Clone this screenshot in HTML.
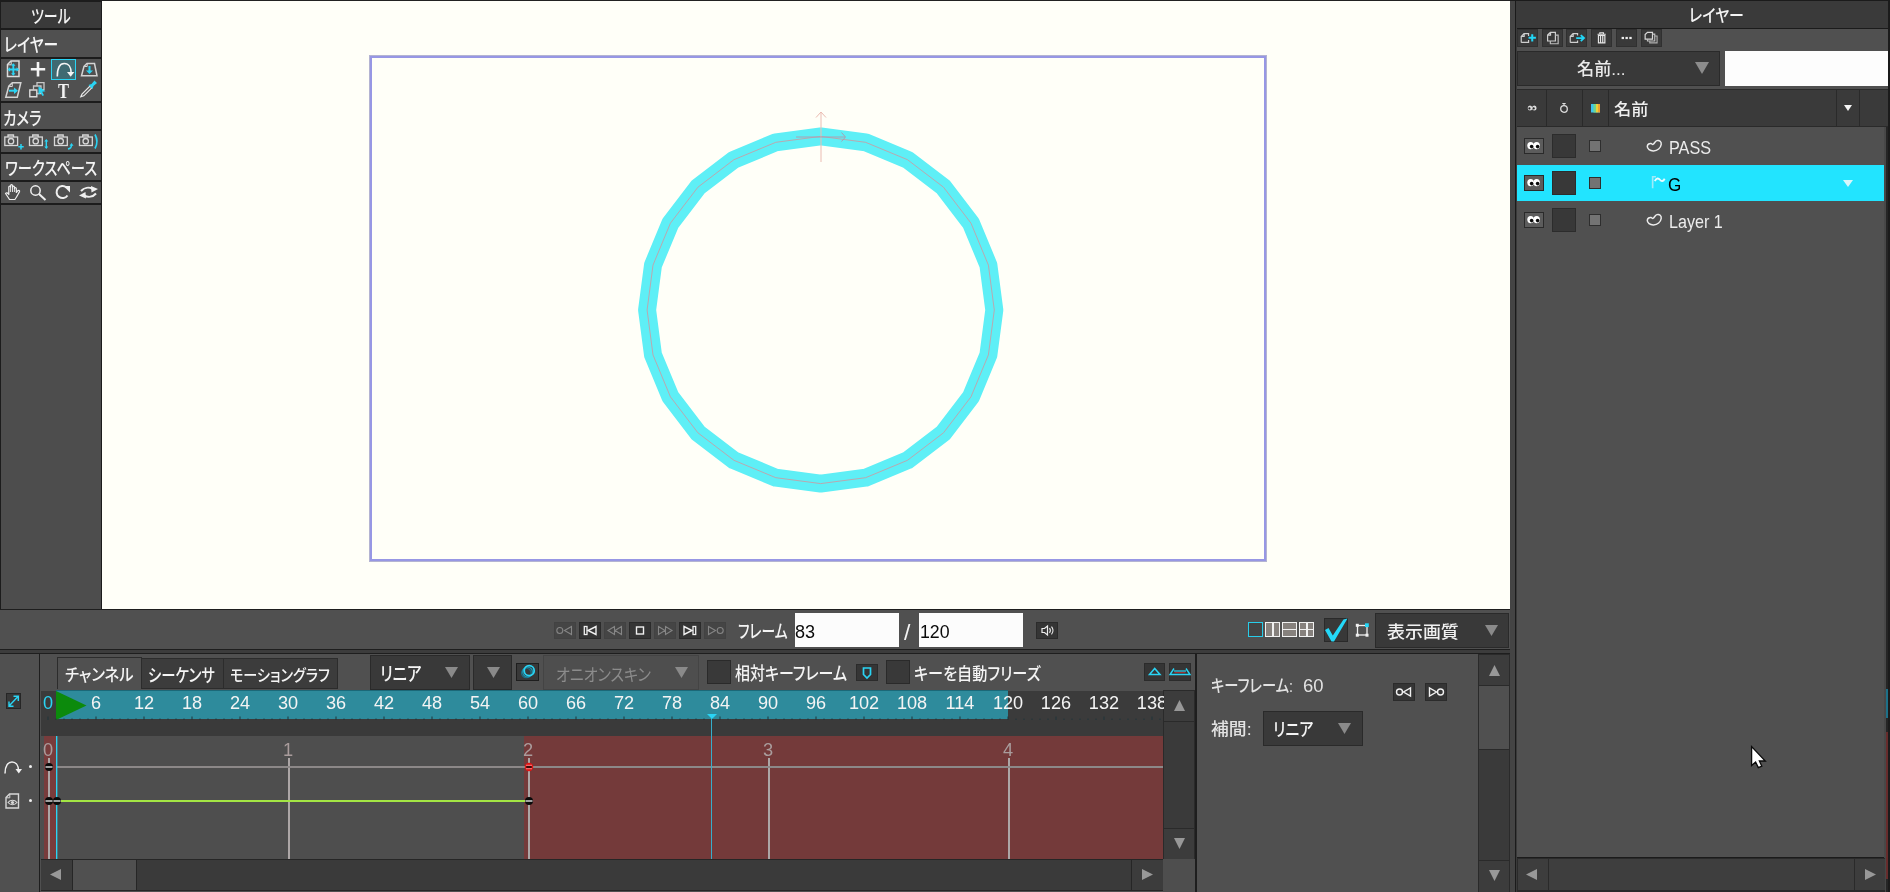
<!DOCTYPE html>
<html lang="ja">
<head>
<meta charset="utf-8">
<title>Moho</title>
<style>
html,body{margin:0;padding:0;}
body{width:1890px;height:892px;overflow:hidden;background:#222;position:relative;
  font-family:"Liberation Sans","Noto Sans CJK JP",sans-serif;color:#f2f2f2;font-size:16px;}
.a{position:absolute;box-sizing:border-box;}
.mid{background:#505050;}
.dk{background:#3a3a3a;}
.ln{background:#1e1e1e;}
.t{position:absolute;white-space:nowrap;line-height:1;transform-origin:0 0;font-weight:400;
  font-feature-settings:"palt";}
#texts{position:absolute;left:0;top:0;width:1890px;height:892px;will-change:transform;pointer-events:none;}
.ti{position:absolute;will-change:transform;line-height:1;font-size:20px;font-family:"Liberation Serif",serif;font-weight:700;color:#f4f4f4;transform:scaleX(.82);transform-origin:0 0;}
svg{position:absolute;overflow:visible;}
.rl{top:6px;width:40px;text-align:center;font-size:18px;font-weight:400;transform:scaleX(.88);transform-origin:50% 50%;}
</style>
</head>
<body>
<!-- ================= LEFT TOOLBAR ================= -->
<div id="left" class="a" style="left:0;top:0;width:102px;height:610px;background:#1c1c1c;">
  <div class="a dk" style="left:1px;top:2px;width:100px;height:26px;"></div>
  <div class="a mid" style="left:1px;top:30px;width:100px;height:27px;"></div>
  <div class="a mid" style="left:1px;top:59px;width:100px;height:42px;"></div>
  <div class="a mid" style="left:1px;top:103px;width:100px;height:26px;"></div>
  <div class="a mid" style="left:1px;top:131px;width:100px;height:21px;"></div>
  <div class="a mid" style="left:1px;top:154px;width:100px;height:26px;"></div>
  <div class="a mid" style="left:1px;top:182px;width:100px;height:21px;"></div>
  <div class="a" style="left:1px;top:205px;width:100px;height:404px;background:#4d4d4d;"></div>
  <div class="a" style="left:50.500px;top:59px;width:25.500px;height:21px;background:#3f6a72;border:1.500px solid #2ad4f4;"></div>
  <svg width="102" height="210" style="left:0;top:0;" viewBox="0 0 102 210" fill="none" stroke-linecap="butt">
    <!-- row 1 -->
    <path d="M7.500 76.500V64.500l3.500-3.500h8v15.500z" stroke="#dcdcdc" stroke-width="1.500"/>
    <path d="M7.700 64.800h3.500V61.200" stroke="#dcdcdc" stroke-width="1"/>
    <path d="M13.300 64.500v10M8.800 69.500h9" stroke="#2ad4f4" stroke-width="1.800"/>
    <path d="M13.300 63.200l2.200 2.500h-4.400zM13.300 75.800l2.200-2.500h-4.400zM7.500 69.500l2.500-2.200v4.400zM19.100 69.500l-2.500-2.200v4.400z" fill="#2ad4f4"/>
    <path d="M38 62v14.500M30.800 69.200h14.400" stroke="#f4f4f4" stroke-width="2.600"/>
    <path d="M57.300 76.500c0-8 2.500-13 7-13s6.800 4 6.800 9" stroke="#f4f4f4" stroke-width="1.600"/>
    <path d="M67 72h7.300l-3.600 4.800z" fill="#f4f4f4"/>
    <path d="M81.500 75.800l2.500-9.500 3-2.800h7.500l2.500 12.300z" stroke="#d4d4d4" stroke-width="1.500"/>
    <path d="M84.200 66.500h3V63.800" stroke="#d4d4d4" stroke-width="1"/>
    <path d="M89.500 66v5.500" stroke="#2ad4f4" stroke-width="2"/>
    <path d="M86 70.500h7l-3.500 3.500z" fill="#2ad4f4"/>
    <!-- row 2 -->
    <path d="M5.800 97.200l3-11 3.500-3.500h8.500l-3.500 14.500z" stroke="#d4d4d4" stroke-width="1.500"/>
    <path d="M9 86.500h3.300v-3.500" stroke="#d4d4d4" stroke-width="1"/>
    <path d="M9 90.700h6" stroke="#2ad4f4" stroke-width="2"/>
    <path d="M14 87.500l4 3.200-4 3.200z" fill="#2ad4f4"/>
    <path d="M29.800 90h7v6.800h-7z" stroke="#dcdcdc" stroke-width="1.400"/>
    <path d="M33.500 90V86h7.500v7.500h-4" stroke="#c8c8c8" stroke-width="1.300"/>
    <path d="M37 86V82.700h7v7h-3" stroke="#c8c8c8" stroke-width="1.300"/>
    <path d="M38.500 86.300l7 5-3.300.5 1.800 3.500-1.600.8-1.800-3.500-2.100 2.400z" fill="#2ad4f4"/>
    <!-- eyedropper -->
    <path d="M80.800 96.800l1.200-2.800 8-8 1.800 1.800-8 8z" stroke="#e8e8e8" stroke-width="1.200" fill="#555"/>
    <path d="M88.500 85l3-1 3-3.500 2.500 2.500-3.500 3-1 3z" fill="#2ad4f4"/>
    <!-- cameras -->
    <g stroke="#d8d8d8" stroke-width="1.300">
      <rect x="4.800" y="137" width="12.800" height="8.500"/><path d="M8 137v-2h5.500v2"/><circle cx="11" cy="141.200" r="2.700"/>
      <rect x="29.500" y="137" width="12.800" height="8.500"/><path d="M32.700 137v-2h5.500v2"/><circle cx="35.700" cy="141.200" r="2.700"/>
      <rect x="54.500" y="137" width="12.800" height="8.500"/><path d="M57.700 137v-2h5.500v2"/><circle cx="60.700" cy="141.200" r="2.700"/>
      <rect x="79.500" y="137" width="12.800" height="8.500"/><path d="M82.700 137v-2h5.500v2"/><circle cx="85.700" cy="141.200" r="2.700"/>
    </g>
    <path d="M21 144v5.500M18.300 146.700h5.400" stroke="#2ad4f4" stroke-width="1.500"/>
    <path d="M46.300 140.500v7" stroke="#2ad4f4" stroke-width="1.400"/>
    <path d="M46.300 139l2 2.500h-4zM46.300 149l2-2.500h-4z" fill="#2ad4f4"/>
    <path d="M68 149c2.500-.5 3.500-2 3.500-4" stroke="#2ad4f4" stroke-width="1.500"/>
    <path d="M71.500 143l2 2.800h-4z" fill="#2ad4f4"/>
    <path d="M95 134.500c2.500 4.500 2.500 9.500 0 14" stroke="#2ad4f4" stroke-width="1.700"/>
    <!-- hand -->
    <path d="M9.500 199.500c-1.500-2.500-3-4.500-4-6 .8-1 2-.8 3.300 1V187c0-1.300 1.800-1.300 1.800 0v-1.500c0-1.300 1.900-1.300 1.900 0V187c0-1.300 1.900-1.300 1.900 0v1.500c0-1.300 1.900-1.300 1.900 0v4l1.500-1.800c1-1 2.300 0 1.600 1.200-1.300 2.300-2.500 5-4.500 7.600z" stroke="#f0f0f0" stroke-width="1.200" stroke-linejoin="round"/>
    <path d="M10.600 187v5M12.500 187v5M14.400 188.500v3.500" stroke="#f0f0f0" stroke-width=".9"/>
    <!-- magnifier -->
    <circle cx="35.500" cy="190.500" r="4.700" stroke="#f0f0f0" stroke-width="1.500"/>
    <path d="M39 194l6.500 6" stroke="#f0f0f0" stroke-width="2"/>
    <!-- rotate -->
    <path d="M67.500 195.500a6 6 0 1 1-1-8" stroke="#f0f0f0" stroke-width="2"/>
    <path d="M63.500 186h6.500v6.500z" fill="#f0f0f0"/>
    <!-- swap arrows -->
    <path d="M81 191c3-3.500 8-4 12-2" stroke="#f0f0f0" stroke-width="2"/>
    <path d="M91 186l7 3-6.500 3.500z" fill="#f0f0f0"/>
    <path d="M96 193.500c-3 3.500-8 4-12 2" stroke="#f0f0f0" stroke-width="2"/>
    <path d="M86 198.500l-7-3 6.500-3.500z" fill="#f0f0f0"/>
  </svg>
  <span class="ti" style="left:57.500px;top:81px;">T</span>
</div>

<!-- ================= CANVAS ================= -->
<div id="canvas" class="a" style="left:102px;top:1px;width:1408px;height:608px;background:#fffff8;">
  <div class="a" style="left:267px;top:54px;width:898px;height:507px;border:1px solid #b4b4d2;"></div><div class="a" style="left:268px;top:55px;width:896px;height:505px;border:2px solid #9797e4;"></div>
  <svg width="1408" height="608" style="left:0;top:0;">
    <polygon points="718.7,135.4 673.8,141.3 631.9,158.7 595.9,186.2 568.4,222.2 551.0,264.1 545.1,309.0 551.0,353.9 568.4,395.8 595.9,431.8 631.9,459.3 673.8,476.7 718.7,482.6 763.6,476.7 805.5,459.3 841.5,431.8 869.0,395.8 886.4,353.9 892.3,309.0 886.4,264.1 869.0,222.2 841.5,186.2 805.5,158.7 763.6,141.3" fill="none" stroke="#5eeff6" stroke-width="18" stroke-linejoin="round"/>
    <polygon points="718.7,135.4 673.8,141.3 631.9,158.7 595.9,186.2 568.4,222.2 551.0,264.1 545.1,309.0 551.0,353.9 568.4,395.8 595.9,431.8 631.9,459.3 673.8,476.7 718.7,482.6 763.6,476.7 805.5,459.3 841.5,431.8 869.0,395.8 886.4,353.9 892.3,309.0 886.4,264.1 869.0,222.2 841.5,186.2 805.5,158.7 763.6,141.3" fill="none" stroke="#b9a9b0" stroke-width="1"/>
    <g fill="none" stroke="#ebbcb2" stroke-width="1">
      <path d="M719 161V111M714 116.5l5-5.5 5 5.5"/>
      <path d="M694 136h49M739.5 131.5l4 4.5-4 4.5" stroke="#a8a0b4"/>
    </g>
  </svg>
</div>

<!-- ================= RIGHT PANEL ================= -->
<div id="right" class="a" style="left:1510px;top:0;width:380px;height:892px;background:#1b1b1b;">
  <div class="a" style="left:0;top:1px;width:4.500px;height:891px;background:#444;"></div>
  <div class="a" style="left:6px;top:1px;width:1px;height:891px;background:#3a3a3a;"></div>
  <div class="a dk" style="left:7px;top:1px;width:371px;height:27px;"></div>
  <div class="a mid" style="left:7px;top:29px;width:371px;height:97px;"></div>
  <div class="a" style="left:7.0px;top:29px;width:21px;height:17.500px;background:#393939;border:1px solid #303030;"></div><svg width="19.300" height="15.600" style="left:7.8px;top:29.600px;" viewBox="0 0 21 17"><path d="M3.500 13.500V7l3-3h5v2.500M11.500 11v2.500h-8M3.700 7h3V4" fill="none" stroke="#cfcfcf" stroke-width="1.3"/><path d="M15.500 4.500v8M11.500 8.500h8" stroke="#22d6f6" stroke-width="2.200" fill="none"/></svg>
  <div class="a" style="left:31.7px;top:29px;width:21px;height:17.500px;background:#393939;border:1px solid #303030;"></div><svg width="19.300" height="15.600" style="left:32.5px;top:29.600px;" viewBox="0 0 21 17"><path d="M5 12V5.500l3-3h5.500V12zM5.200 5.600h3V2.700" fill="none" stroke="#cfcfcf" stroke-width="1.3"/><path d="M8 12v3h8.500V5.500h-3" fill="none" stroke="#bdbdbd" stroke-width="1.3"/></svg>
  <div class="a" style="left:56.4px;top:29px;width:21px;height:17.500px;background:#393939;border:1px solid #303030;"></div><svg width="19.300" height="15.600" style="left:57.2px;top:29.600px;" viewBox="0 0 21 17"><path d="M3.500 13.500V7l3-3h5v2M11.500 11.500v2h-8M3.700 7h3V4" fill="none" stroke="#cfcfcf" stroke-width="1.3"/><path d="M10 8.800h8M15 5.500l3.500 3.300-3.500 3.300" stroke="#22d6f6" stroke-width="2" fill="none"/></svg>
  <div class="a" style="left:81.1px;top:29px;width:21px;height:17.500px;background:#393939;border:1px solid #303030;"></div><svg width="19.300" height="15.600" style="left:81.9px;top:29.600px;" viewBox="0 0 21 17"><path d="M6 4.700h9M8.500 4.500V3h4v1.500" fill="none" stroke="#e6e6e6" stroke-width="1.2"/><path d="M7 6h7v8H7zM9.300 6v8M11.700 6v8" fill="none" stroke="#e6e6e6" stroke-width="1.3"/></svg>
  <div class="a" style="left:105.8px;top:29px;width:21px;height:17.500px;background:#393939;border:1px solid #303030;"></div><svg width="19.300" height="15.600" style="left:106.6px;top:29.600px;" viewBox="0 0 21 17"><rect x="5" y="7.500" width="2.600" height="2.400" fill="#eee"/><rect x="9.200" y="7.500" width="2.600" height="2.400" fill="#eee"/><rect x="13.400" y="7.500" width="2.600" height="2.400" fill="#eee"/></svg>
  <div class="a" style="left:130.5px;top:29px;width:21px;height:17.500px;background:#393939;border:1px solid #303030;"></div><svg width="19.300" height="15.600" style="left:131.3px;top:29.600px;" viewBox="0 0 21 17"><path d="M4.500 10V5l2.500-2.500h5.500V10z" fill="#3a3a3a" stroke="#d8d8d8" stroke-width="1.3"/><path d="M7 10v2h8V4.500h-2.500" fill="none" stroke="#c4c4c4" stroke-width="1.200"/><path d="M9.500 12v2h8V6.500H15" fill="none" stroke="#b0b0b0" stroke-width="1.200"/></svg>
  <div class="a" style="left:7px;top:50.500px;width:203px;height:35px;background:#393939;border:1px solid #2a2a2a;"></div>
  <svg width="14" height="12" style="left:185px;top:62px;" viewBox="0 0 14 12"><path d="M0 0h14L7 12z" fill="#8c8c8c"/></svg>
  <div class="a" style="left:215px;top:50.500px;width:163px;height:35px;background:#fdfdfd;"></div>
  <div class="a" style="left:7px;top:89px;width:371px;height:38px;background:#2a2a2a;"></div>
  <div class="a dk" style="left:7px;top:90px;width:29px;height:36px;"></div>
  <div class="a dk" style="left:37px;top:90px;width:35px;height:36px;"></div>
  <div class="a dk" style="left:73px;top:90px;width:25px;height:36px;"></div>
  <div class="a dk" style="left:99px;top:90px;width:227px;height:36px;"></div>
  <div class="a dk" style="left:327px;top:90px;width:22px;height:36px;"></div>
  <div class="a dk" style="left:350px;top:90px;width:28px;height:36px;"></div>
  <svg width="12" height="8" style="left:16px;top:104px;" viewBox="0 0 12 8"><ellipse cx="4" cy="4" rx="2.300" ry="2.500" fill="#ddd"/><ellipse cx="8.300" cy="4" rx="2.300" ry="2.500" fill="#ddd"/><circle cx="3.400" cy="4.400" r="1.100" fill="#222"/><circle cx="7.700" cy="4.400" r="1.100" fill="#222"/></svg>
  <svg width="10" height="12" style="left:49px;top:102px;" viewBox="0 0 10 12"><circle cx="5" cy="7" r="3.300" fill="none" stroke="#ddd" stroke-width="1.300"/><path d="M3.300 1.500h3.400M5 1.500v2" stroke="#ddd" stroke-width="1.200"/></svg>
  <svg width="8" height="8" style="left:81px;top:104px;" viewBox="0 0 8 8"><rect width="9" height="8.500" fill="#3cc4ee"/><rect x="2.500" width="2.500" height="8.500" fill="#6fd58f"/><rect x="5" width="2" height="8.500" fill="#e8d23c"/><rect x="7" width="2" height="8.500" fill="#f0a030"/></svg>
  <svg width="8" height="6" style="left:334px;top:105px;" viewBox="0 0 8 6"><path d="M0 0h8L4 6z" fill="#f4f4f4"/></svg>
  <div class="a mid" style="left:7px;top:127px;width:371px;height:730px;background:#505050;"></div>
  
  <div class="a" style="left:14px;top:138px;width:19.500px;height:15.500px;background:#5c5c5c;border:1px solid #2a2a2a;"></div>
  <svg width="19" height="15" style="left:14px;top:138px;" viewBox="0 0 19 15"><ellipse cx="6.6" cy="7.6" rx="3.3" ry="3.6" fill="#fff"/><ellipse cx="12.6" cy="7.6" rx="3.3" ry="3.6" fill="#fff"/><circle cx="7.6" cy="8.6" r="1.8" fill="#0a0a0a"/><circle cx="13.6" cy="8.6" r="1.8" fill="#0a0a0a"/></svg>
  <div class="a" style="left:42px;top:134.4px;width:24px;height:23.500px;background:#383838;border:1px solid #2c2c2c;"></div>
  <div class="a" style="left:79px;top:140px;width:12px;height:12px;background:#737373;border:1px solid #2e2e2e;"></div>
  <svg width="17" height="13" style="left:136px;top:139px;" viewBox="0 0 17 13"><path d="M6.900 5.400C8.500 4.800 8.800 2.200 11 1.600C13.500.9 15.600 2.800 15.200 5.500C14.700 9 11.500 11.800 7.500 11.900C4 12 1.200 10 1.300 7.300C1.400 5.200 3.500 4.200 5 4.500C5.800 4.700 6.200 5.500 6.900 5.400z" fill="none" stroke="#ececec" stroke-width="1.500"/></svg>
  
  <div class="a" style="left:7px;top:165px;width:367px;height:36px;background:#22e4ff;"></div>
  <div class="a" style="left:14px;top:175px;width:19.500px;height:15.500px;background:#5c5c5c;border:1px solid #2a2a2a;"></div>
  <svg width="19" height="15" style="left:14px;top:175px;" viewBox="0 0 19 15"><ellipse cx="6.6" cy="7.6" rx="3.3" ry="3.6" fill="#fff"/><ellipse cx="12.6" cy="7.6" rx="3.3" ry="3.6" fill="#fff"/><circle cx="7.6" cy="8.6" r="1.8" fill="#0a0a0a"/><circle cx="13.6" cy="8.6" r="1.8" fill="#0a0a0a"/></svg>
  <div class="a" style="left:42px;top:171.4px;width:24px;height:23.500px;background:#383838;border:1px solid #2c2c2c;"></div>
  <div class="a" style="left:79px;top:177px;width:12px;height:12px;background:#737373;border:1px solid #2e2e2e;"></div>
  <svg width="17.500" height="17.500" style="left:141px;top:174px;" viewBox="0 0 16 16"><path d="M1.500 13V2.500h3" fill="none" stroke="#9feaf8" stroke-width="1.5"/><path d="M3.500 6.500c1.500-3 3.300-3 4.700-1.200s3 1.500 4.300-1" fill="none" stroke="#e8fbff" stroke-width="1.7"/></svg>
  <svg width="10" height="7" style="left:333px;top:180px;" viewBox="0 0 10 7"><path d="M0 0h10L5 7z" fill="#d8f6fb"/></svg>
  
  <div class="a" style="left:14px;top:212px;width:19.500px;height:15.500px;background:#5c5c5c;border:1px solid #2a2a2a;"></div>
  <svg width="19" height="15" style="left:14px;top:212px;" viewBox="0 0 19 15"><ellipse cx="6.6" cy="7.6" rx="3.3" ry="3.6" fill="#fff"/><ellipse cx="12.6" cy="7.6" rx="3.3" ry="3.6" fill="#fff"/><circle cx="7.6" cy="8.6" r="1.8" fill="#0a0a0a"/><circle cx="13.6" cy="8.6" r="1.8" fill="#0a0a0a"/></svg>
  <div class="a" style="left:42px;top:208.4px;width:24px;height:23.500px;background:#383838;border:1px solid #2c2c2c;"></div>
  <div class="a" style="left:79px;top:214px;width:12px;height:12px;background:#737373;border:1px solid #2e2e2e;"></div>
  <svg width="17" height="13" style="left:136px;top:213px;" viewBox="0 0 17 13"><path d="M6.900 5.400C8.500 4.800 8.800 2.200 11 1.600C13.500.9 15.600 2.800 15.200 5.500C14.700 9 11.500 11.800 7.500 11.900C4 12 1.200 10 1.300 7.300C1.400 5.200 3.500 4.200 5 4.500C5.800 4.700 6.200 5.500 6.900 5.400z" fill="none" stroke="#ececec" stroke-width="1.500"/></svg>
  

  <div class="a" style="left:374px;top:127px;width:2px;height:765px;background:#484848;"></div>
  <div class="a" style="left:375.500px;top:127px;width:2.500px;height:765px;background:#262626;"></div>
  <div class="a" style="left:375.500px;top:689px;width:2px;height:29px;background:#1d7088;"></div>
  <div class="a" style="left:375.500px;top:732px;width:2px;height:147px;background:#672c2c;"></div>
  <!-- bottom scrollbar -->
  <div class="a" style="left:7px;top:858px;width:368px;height:34px;background:#2a2a2a;"></div>
  <div class="a" style="left:7.500px;top:859px;width:30px;height:31px;background:#3d3d3d;"></div>
  <div class="a" style="left:38.500px;top:859px;width:305px;height:31px;background:#3e3e3e;"></div>
  <div class="a" style="left:344.500px;top:859px;width:30.500px;height:31px;background:#3d3d3d;"></div>
  <svg width="11" height="11" style="left:16px;top:869px;" viewBox="0 0 11 11"><path d="M11 0v11L0 5.500z" fill="#989898"/></svg>
  <svg width="11" height="11" style="left:355px;top:869px;" viewBox="0 0 11 11"><path d="M0 0v11L11 5.500z" fill="#989898"/></svg>
  <!-- mouse cursor -->
  <svg width="17" height="24" style="left:240px;top:745px;" viewBox="0 0 17 24"><path d="M1.600 1.600V20.500L5.600 17 8.300 22.600 11.800 21.200 9.400 16H15.300z" fill="#fff" stroke="#0a0a0a" stroke-width="1.300" stroke-linejoin="miter"/></svg>
</div>

<!-- ================= PLAYBACK BAR ================= -->
<div class="a ln" style="left:0;top:609px;width:1510px;height:1px;"></div>
<div id="play" class="a mid" style="left:0;top:610px;width:1510px;height:39px;">
  <div class="a" style="left:554.0px;top:11.5px;width:22px;height:17px;background:#454545;border:1px solid #424242;"></div><svg width="22" height="17" style="left:554.0px;top:11.5px;" viewBox="0 0 22 17"><circle cx="5.8" cy="8.5" r="3" fill="none" stroke="#858585" stroke-width="1.1"/><path d="M17.5 4.5v8l-7-4z" fill="none" stroke="#858585" stroke-width="1.1"/></svg>
  <div class="a" style="left:579.1px;top:11.5px;width:22px;height:17px;background:#353535;border:1px solid #2b2b2b;"></div><svg width="22" height="17" style="left:579.1px;top:11.5px;" viewBox="0 0 22 17"><rect x="5.300" y="4.500" width="2.700" height="8" fill="none" stroke="#f0f0f0" stroke-width="1.300"/><path d="M17 4.500v8l-8-4z" fill="none" stroke="#f0f0f0" stroke-width="1.400"/></svg>
  <div class="a" style="left:604.1px;top:11.5px;width:22px;height:17px;background:#454545;border:1px solid #424242;"></div><svg width="22" height="17" style="left:604.1px;top:11.5px;" viewBox="0 0 22 17"><path d="M10.500 4.500v8l-6.500-4zM17.500 4.500v8l-6.500-4z" fill="none" stroke="#858585" stroke-width="1.100"/></svg>
  <div class="a" style="left:629.2px;top:11.5px;width:22px;height:17px;background:#353535;border:1px solid #2b2b2b;"></div><svg width="22" height="17" style="left:629.2px;top:11.5px;" viewBox="0 0 22 17"><rect x="7.500" y="5" width="7" height="7" fill="none" stroke="#f0f0f0" stroke-width="1.400"/></svg>
  <div class="a" style="left:654.3px;top:11.5px;width:22px;height:17px;background:#454545;border:1px solid #424242;"></div><svg width="22" height="17" style="left:654.3px;top:11.5px;" viewBox="0 0 22 17"><path d="M4.500 4.500v8l6.500-4zM11.500 4.500v8l6.500-4z" fill="none" stroke="#858585" stroke-width="1.100"/></svg>
  <div class="a" style="left:679.4px;top:11.5px;width:22px;height:17px;background:#353535;border:1px solid #2b2b2b;"></div><svg width="22" height="17" style="left:679.4px;top:11.5px;" viewBox="0 0 22 17"><rect x="14" y="4.500" width="2.700" height="8" fill="none" stroke="#f0f0f0" stroke-width="1.300"/><path d="M5 4.500v8l8-4z" fill="none" stroke="#f0f0f0" stroke-width="1.400"/></svg>
  <div class="a" style="left:704.4px;top:11.5px;width:22px;height:17px;background:#454545;border:1px solid #424242;"></div><svg width="22" height="17" style="left:704.4px;top:11.5px;" viewBox="0 0 22 17"><circle cx="16.200" cy="8.500" r="3" fill="none" stroke="#858585" stroke-width="1.100"/><path d="M4.500 4.500v8l7-4z" fill="none" stroke="#858585" stroke-width="1.100"/></svg>
  <div class="a" style="left:795px;top:3px;width:104px;height:33.500px;background:#fcfcfc;"></div>
  <div class="a" style="left:919px;top:3px;width:104px;height:33.500px;background:#fcfcfc;"></div>
  <div class="a" style="left:1036px;top:11.500px;width:22px;height:17px;background:#353535;border:1px solid #2b2b2b;"></div>
  <svg width="22" height="17" style="left:1036px;top:11.500px;" viewBox="0 0 22 17"><path d="M6 6.500h2.500l3-2.500v9l-3-2.500H6z" fill="none" stroke="#eee" stroke-width="1.200"/><path d="M13.500 6.200c1 1.300 1 3.300 0 4.600M15.500 4.700c1.800 2.200 1.800 5.400 0 7.600" fill="none" stroke="#eee" stroke-width="1.100"/></svg>
  <!-- layout icons -->
  <div class="a" style="left:1247.500px;top:12px;width:15.500px;height:15px;background:#444;border:1.500px solid #27cdea;"></div>
  <div class="a" style="left:1265px;top:12px;width:15px;height:15px;background:#86817d;border:1.500px solid #f1f1f1;"></div>
  <div class="a" style="left:1272px;top:12px;width:1.500px;height:15px;background:#f1f1f1;"></div>
  <div class="a" style="left:1282px;top:12px;width:15px;height:15px;background:#86817d;border:1.500px solid #f1f1f1;"></div>
  <div class="a" style="left:1282px;top:18.500px;width:15px;height:1.500px;background:#f1f1f1;"></div>
  <div class="a" style="left:1299px;top:12px;width:15px;height:15px;background:#86817d;border:1.500px solid #f1f1f1;"></div>
  <div class="a" style="left:1306px;top:12px;width:1.500px;height:15px;background:#f1f1f1;"></div>
  <div class="a" style="left:1299px;top:18.500px;width:15px;height:1.500px;background:#f1f1f1;"></div>
  <!-- checkbox -->
  <div class="a" style="left:1324px;top:8px;width:23.500px;height:23.500px;background:#383838;border:1px solid #2a2a2a;"></div>
  <svg width="26" height="26" style="left:1323px;top:7px;" viewBox="0 0 26 26"><path d="M2 13L5.500 11 9.800 18.500 20.500 2.500 24.500 1.500 11 24.500 8.500 24.500z" fill="#24d8f8"/></svg>
  <svg width="15" height="15" style="left:1355px;top:13px;" viewBox="0 0 15 15"><rect x="2.500" y="2.500" width="9.500" height="9.500" fill="none" stroke="#f0f0f0" stroke-width="1.300"/><rect x="0.800" y="0.800" width="3" height="3" fill="#f0f0f0"/><rect x="0.800" y="10.700" width="3" height="3" fill="#f0f0f0"/><rect x="10.500" y="10.700" width="3" height="3" fill="#f0f0f0"/><rect x="10" y="0.300" width="3.800" height="3.800" fill="#24d8f8"/></svg>
  <!-- quality dropdown -->
  <div class="a" style="left:1375px;top:2.500px;width:134px;height:35px;background:#393939;border:1px solid #2a2a2a;"></div>
  <svg width="13" height="11" style="left:1484.500px;top:15px;" viewBox="0 0 13 11"><path d="M0 0h13L6.500 11z" fill="#8a8a8a"/></svg>
</div>

<!-- ================= TIMELINE ================= -->
<div id="tl" class="a" style="left:0;top:649px;width:1510px;height:243px;background:#505050;overflow:hidden;">
<div class="a ln" style="left:0;top:0;width:1510px;height:1px;"></div>
<div class="a" style="left:0;top:1px;width:1510px;height:3px;background:#3c3c3c;"></div>
<div class="a ln" style="left:0;top:4px;width:1510px;height:1px;"></div>
<div class="a ln" style="left:39px;top:5px;width:1.300px;height:238px;"></div>
<div class="a" style="left:57px;top:8px;width:84.500px;height:32px;background:#505050;border:1px solid #2c2c2c;border-bottom:none;"></div>
<div class="a" style="left:141px;top:9px;width:82.500px;height:31px;background:#3c3c3c;border:1px solid #2c2c2c;"></div>
<div class="a" style="left:223px;top:9px;width:115px;height:31px;background:#3c3c3c;border:1px solid #2c2c2c;"></div>
<div class="a" style="left:370px;top:5.5px;width:99.500px;height:35px;background:#393939;border:1px solid #2a2a2a;"></div>
<svg width="13" height="11" style="left:444.500px;top:18px;" viewBox="0 0 13 11"><path d="M0 0h13L6.500 11z" fill="#8a8a8a"/></svg>
<div class="a" style="left:472.500px;top:5.5px;width:39.500px;height:35px;background:#393939;border:1px solid #2a2a2a;"></div>
<svg width="13" height="11" style="left:487px;top:18px;" viewBox="0 0 13 11"><path d="M0 0h13L6.500 11z" fill="#8a8a8a"/></svg>
<div class="a" style="left:516px;top:14.0px;width:22.500px;height:17.500px;background:#383838;border:1px solid #1e1e1e;"></div>
<svg width="23" height="18" style="left:516px;top:14.0px;" viewBox="0 0 23 18"><circle cx="10.300" cy="10" r="4.800" fill="none" stroke="#1b6f86" stroke-width="1.100"/><circle cx="11.600" cy="9" r="4.900" fill="none" stroke="#1d93ad" stroke-width="1.300"/><circle cx="13.200" cy="7.700" r="5" fill="none" stroke="#2ad4f4" stroke-width="1.800"/></svg>
<div class="a" style="left:543px;top:5.5px;width:156px;height:35px;background:#4e4e4e;border:1px solid #444;"></div>
<svg width="13" height="11" style="left:675px;top:18px;" viewBox="0 0 13 11"><path d="M0 0h13L6.500 11z" fill="#8a8a8a"/></svg>
<div class="a" style="left:707px;top:11px;width:23.500px;height:23.500px;background:#393939;border:1px solid #2a2a2a;"></div>
<div class="a" style="left:856px;top:14.5px;width:22px;height:17.500px;background:#353535;border:1px solid #2b2b2b;"></div>
<svg width="22" height="18" style="left:856px;top:14.5px;" viewBox="0 0 22 18"><path d="M7.500 4h7v6.500l-3.500 3.500-3.500-3.500z" fill="none" stroke="#2ad4f4" stroke-width="1.700"/></svg>
<div class="a" style="left:886px;top:11px;width:23.500px;height:23.500px;background:#393939;border:1px solid #2a2a2a;"></div>
<div class="a" style="left:1143.500px;top:14.0px;width:21.500px;height:17.500px;background:#353535;border:1px solid #2b2b2b;"></div>
<svg width="22" height="18" style="left:1143.500px;top:14.0px;" viewBox="0 0 22 18"><path d="M5.500 11.500L10.700 5.500 16 11.500z" fill="none" stroke="#2ad4f4" stroke-width="1.500"/></svg>
<div class="a" style="left:1169px;top:14.0px;width:22px;height:17.500px;background:#353535;border:1px solid #2b2b2b;"></div>
<svg width="22" height="18" style="left:1169px;top:14.0px;" viewBox="0 0 22 18"><path d="M5.500 9.500h11" stroke="#a03030" stroke-width="1.200"/><path d="M5 5.500L1 11.500h20l-4-6" fill="none" stroke="#2ad4f4" stroke-width="1.400"/><path d="M5 8h12" stroke="#2ad4f4" stroke-width="1.200"/></svg>
<div class="a" style="left:6px;top:44px;width:14.500px;height:16px;background:#383838;border:1px solid #262626;"></div>
<svg width="15" height="16" style="left:6px;top:44px;" viewBox="0 0 15 16"><path d="M3 13L12 3.500M7.500 3.200h4.800v4.800M3 8.500v4.700h4.500" fill="none" stroke="#2ad4f4" stroke-width="1.400"/></svg>
<div class="a" style="left:40.500px;top:41.5px;width:1122.500px;height:29px;background:#3b3b3b;"></div>
<div class="a" style="left:56px;top:41px;width:952px;height:29px;background:#2e8b9c;border-top:1px solid #1b6878;"></div>
<svg width="31" height="29" style="left:56px;top:41.5px;" viewBox="0 0 31 29"><path d="M0 0v29l30.500-14.500z" fill="#0c8a0c"/></svg>
<svg width="1163" height="29" style="left:0;top:41.5px;" viewBox="0 0 1163 29"><path d="M48 25.500v3.500 M56 27.500v1.500 M64 27.500v1.500 M72 27.500v1.500 M80 27.500v1.500 M88 27.500v1.500 M96 25.500v3.500 M104 27.500v1.500 M112 27.500v1.500 M120 27.500v1.500 M128 27.500v1.500 M136 27.500v1.500 M144 25.500v3.500 M152 27.500v1.500 M160 27.500v1.500 M168 27.500v1.500 M176 27.500v1.500 M184 27.500v1.500 M192 25.500v3.500 M200 27.500v1.500 M208 27.500v1.500 M216 27.500v1.500 M224 27.500v1.500 M232 27.500v1.500 M240 25.500v3.500 M248 27.500v1.500 M256 27.500v1.500 M264 27.500v1.500 M272 27.500v1.500 M280 27.500v1.500 M288 25.500v3.500 M296 27.500v1.500 M304 27.500v1.500 M312 27.500v1.500 M320 27.500v1.500 M328 27.500v1.500 M336 25.500v3.500 M344 27.500v1.500 M352 27.500v1.500 M360 27.500v1.500 M368 27.500v1.500 M376 27.500v1.500 M384 25.500v3.500 M392 27.500v1.500 M400 27.500v1.500 M408 27.500v1.500 M416 27.500v1.500 M424 27.500v1.500 M432 25.500v3.500 M440 27.500v1.500 M448 27.500v1.500 M456 27.500v1.500 M464 27.500v1.500 M472 27.500v1.500 M480 25.500v3.500 M488 27.500v1.500 M496 27.500v1.500 M504 27.500v1.500 M512 27.500v1.500 M520 27.500v1.500 M528 25.500v3.500 M536 27.500v1.500 M544 27.500v1.500 M552 27.500v1.500 M560 27.500v1.500 M568 27.500v1.500 M576 25.500v3.500 M584 27.500v1.500 M592 27.500v1.500 M600 27.500v1.500 M608 27.500v1.500 M616 27.500v1.500 M624 25.500v3.500 M632 27.500v1.500 M640 27.500v1.500 M648 27.500v1.500 M656 27.500v1.500 M664 27.500v1.500 M672 25.500v3.500 M680 27.500v1.500 M688 27.500v1.500 M696 27.500v1.500 M704 27.500v1.500 M712 27.500v1.500 M720 25.500v3.500 M728 27.500v1.500 M736 27.500v1.500 M744 27.500v1.500 M752 27.500v1.500 M760 27.500v1.500 M768 25.500v3.500 M776 27.500v1.500 M784 27.500v1.500 M792 27.500v1.500 M800 27.500v1.500 M808 27.500v1.500 M816 25.500v3.500 M824 27.500v1.500 M832 27.500v1.500 M840 27.500v1.500 M848 27.500v1.500 M856 27.500v1.500 M864 25.500v3.500 M872 27.500v1.500 M880 27.500v1.500 M888 27.500v1.500 M896 27.500v1.500 M904 27.500v1.500 M912 25.500v3.500 M920 27.500v1.500 M928 27.500v1.500 M936 27.500v1.500 M944 27.500v1.500 M952 27.500v1.500 M960 25.500v3.500 M968 27.500v1.500 M976 27.500v1.500 M984 27.500v1.500 M992 27.500v1.500 M1000 27.500v1.500 M1008 25.500v3.500 M1016 27.500v1.500 M1024 27.500v1.500 M1032 27.500v1.500 M1040 27.500v1.500 M1048 27.500v1.500 M1056 25.500v3.500 M1064 27.500v1.500 M1072 27.500v1.500 M1080 27.500v1.500 M1088 27.500v1.500 M1096 27.500v1.500 M1104 25.500v3.500 M1112 27.500v1.500 M1120 27.500v1.500 M1128 27.500v1.500 M1136 27.500v1.500 M1144 27.500v1.500 M1152 25.500v3.500 M1160 27.500v1.500" stroke="#20343a" stroke-width="1" fill="none"/></svg>
<div class="a" style="left:40px;top:41.5px;width:1123px;height:29px;overflow:hidden;">
</div>
<div class="a" style="left:40.500px;top:70.5px;width:1122.500px;height:16.500px;background:#3a3a3a;"></div>
<div class="a" style="left:40.500px;top:87px;width:1122.500px;height:123px;background:#4e4e4e;"></div>
<div class="a" style="left:44px;top:87px;width:12px;height:123px;background:#783c3c;"></div>
<div class="a" style="left:524px;top:87px;width:639px;height:123px;background:#743a3a;"></div>
<div class="a" style="left:48px;top:109px;width:2px;height:101px;background:#aca6a6;"></div>
<div class="a" style="left:288px;top:109px;width:2px;height:101px;background:#aca6a6;"></div>
<div class="a" style="left:528px;top:109px;width:2px;height:101px;background:#aca6a6;"></div>
<div class="a" style="left:768px;top:109px;width:2px;height:101px;background:#aca6a6;"></div>
<div class="a" style="left:1008px;top:109px;width:2px;height:101px;background:#aca6a6;"></div>
<div class="a" style="left:57px;top:117.0px;width:1106px;height:2px;background:#8c8888;"></div>
<div class="a" style="left:57px;top:150.8px;width:471px;height:2.500px;background:#a3e544;"></div>
<div class="a" style="left:56px;top:87px;width:1px;height:123px;background:#2ad4f4;"></div><div class="a" style="left:57px;top:87px;width:1px;height:123px;background:#2ad4f4;opacity:.35;"></div>
<div class="a" style="left:711px;top:69px;width:1.300px;height:141px;background:#36aecb;"></div>
<svg width="10" height="5" style="left:707px;top:65px;" viewBox="0 0 10 5"><path d="M0 0h10L5 5z" fill="#2ad4f4"/></svg>
<svg width="10" height="10" style="left:43.5px;top:113.0px;" viewBox="0 0 10 10"><circle cx="5" cy="5" r="4" fill="#0a0a0a"/><path d="M1.500 5h7" stroke="#f4f4f4" stroke-width="1.300"/></svg>
<svg width="10" height="10" style="left:523.5px;top:113.0px;" viewBox="0 0 10 10"><circle cx="5" cy="5" r="4.200" fill="#e41414"/><path d="M2 3.300h6M2 6.700h6" stroke="#f59a9a" stroke-width=".8"/><path d="M2.300 5h5.400" stroke="#0a0a0a" stroke-width="1.600"/></svg>
<svg width="10" height="10" style="left:43.5px;top:147.0px;" viewBox="0 0 10 10"><circle cx="5" cy="5" r="4" fill="#0a0a0a"/><path d="M1.500 5h7" stroke="#f4f4f4" stroke-width="1.300"/></svg>
<svg width="10" height="10" style="left:52.0px;top:147.0px;" viewBox="0 0 10 10"><circle cx="5" cy="5" r="4" fill="#0a0a0a"/><path d="M1.500 5h7" stroke="#f4f4f4" stroke-width="1.300"/></svg>
<svg width="10" height="10" style="left:523.5px;top:147.0px;" viewBox="0 0 10 10"><circle cx="5" cy="5" r="4" fill="#0a0a0a"/><path d="M1.500 5h7" stroke="#f4f4f4" stroke-width="1.300"/></svg>
<svg width="20" height="15" style="left:3px;top:111px;" viewBox="0 0 20 15"><path d="M2 13.500C2 6 5 2 9 2s6.500 3.500 6.500 8.500" fill="none" stroke="#f0f0f0" stroke-width="1.500"/><path d="M12.500 9h6.500l-3.200 4.500z" fill="#f0f0f0"/></svg>
<div class="a" style="left:28.500px;top:115.5px;width:3.400px;height:3.400px;border-radius:2px;background:#f0f0f0;"></div>
<svg width="15" height="16" style="left:5px;top:144px;" viewBox="0 0 15 16"><path d="M1 15V4.500L4.500 1H13.500V15z" fill="none" stroke="#d8d8d8" stroke-width="1.400"/><path d="M1.200 4.800H4.800V1.200" fill="none" stroke="#d8d8d8" stroke-width="1"/><path d="M3 9.500c2.500-3 6.500-3 9 0-2.500 3-6.500 3-9 0z" fill="none" stroke="#d8d8d8" stroke-width="1.100"/><circle cx="7.500" cy="9.500" r="1.600" fill="#d8d8d8"/></svg>
<div class="a" style="left:28.500px;top:149.5px;width:3.400px;height:3.400px;border-radius:2px;background:#f0f0f0;"></div>
<div class="a" style="left:40.500px;top:210px;width:1122.500px;height:32px;background:#262626;"></div>
<div class="a" style="left:40.500px;top:210.500px;width:31px;height:30.500px;background:#3c3c3c;"></div>
<div class="a" style="left:72.500px;top:210.500px;width:63px;height:30.500px;background:#505050;"></div>
<div class="a" style="left:136.500px;top:210.500px;width:994.500px;height:30.500px;background:#3a3a3a;"></div>
<div class="a" style="left:1132px;top:210.500px;width:31px;height:30.500px;background:#3c3c3c;"></div>
<svg width="11" height="11" style="left:50px;top:220px;" viewBox="0 0 11 11"><path d="M11 0v11L0 5.500z" fill="#989898"/></svg>
<svg width="11" height="11" style="left:1142px;top:220px;" viewBox="0 0 11 11"><path d="M0 0v11L11 5.500z" fill="#989898"/></svg>
<div class="a" style="left:1163px;top:41px;width:32px;height:169px;background:#2a2a2a;"></div>
<div class="a" style="left:1164px;top:41.5px;width:30px;height:30px;background:#3c3c3c;z-index:2;"></div>
<div class="a" style="left:1164px;top:72.5px;width:30px;height:106px;background:#3a3a3a;"></div>
<div class="a" style="left:1164px;top:179.5px;width:30px;height:30px;background:#3c3c3c;"></div>
<svg width="11" height="11" style="left:1173.500px;top:51px;z-index:3;" viewBox="0 0 11 11"><path d="M0 11h11L5.500 0z" fill="#989898"/></svg>
<svg width="11" height="11" style="left:1173.500px;top:189px;" viewBox="0 0 11 11"><path d="M0 0h11L5.500 11z" fill="#989898"/></svg>
<div class="a" style="left:1163px;top:210px;width:32px;height:33px;background:#4e4e4e;"></div>
<div class="a ln" style="left:1195px;top:5px;width:1.500px;height:238px;"></div>
<div class="a" style="left:1263px;top:61.5px;width:99.500px;height:35.500px;background:#393939;border:1px solid #2a2a2a;"></div>
<svg width="13" height="11" style="left:1338px;top:74px;" viewBox="0 0 13 11"><path d="M0 0h13L6.500 11z" fill="#8a8a8a"/></svg>
<div class="a" style="left:1393px;top:34.0px;width:22px;height:17.500px;background:#353535;border:1px solid #2b2b2b;"></div>
<svg width="22" height="18" style="left:1393px;top:34.0px;" viewBox="0 0 22 18"><circle cx="6.500" cy="9" r="3" fill="none" stroke="#f0f0f0" stroke-width="1.400"/><path d="M17.500 5v8l-7-4z" fill="none" stroke="#f0f0f0" stroke-width="1.400"/></svg>
<div class="a" style="left:1424.500px;top:34.0px;width:22px;height:17.500px;background:#353535;border:1px solid #2b2b2b;"></div>
<svg width="22" height="18" style="left:1424.500px;top:34.0px;" viewBox="0 0 22 18"><circle cx="15.500" cy="9" r="3" fill="none" stroke="#f0f0f0" stroke-width="1.400"/><path d="M4.500 5v8l7-4z" fill="none" stroke="#f0f0f0" stroke-width="1.400"/></svg>
<div class="a" style="left:1478px;top:5px;width:32px;height:238px;background:#2a2a2a;"></div>
<div class="a" style="left:1479px;top:6px;width:30px;height:30px;background:#3c3c3c;"></div>
<div class="a" style="left:1479px;top:37px;width:30px;height:63px;background:#505050;"></div>
<div class="a" style="left:1479px;top:101px;width:30px;height:110px;background:#3a3a3a;"></div>
<div class="a" style="left:1479px;top:212px;width:30px;height:31px;background:#3c3c3c;"></div>
<svg width="11" height="11" style="left:1488.500px;top:16px;" viewBox="0 0 11 11"><path d="M0 11h11L5.500 0z" fill="#989898"/></svg>
<svg width="11" height="11" style="left:1488.500px;top:221px;" viewBox="0 0 11 11"><path d="M0 0h11L5.500 11z" fill="#989898"/></svg>
</div>
<!-- TEXT START -->
<div id="texts">
<span class="t" style="left:31.0px;top:7.9px;font-size:18.62px;color:#f4f4f4;font-weight:500;transform:scaleX(0.749);">ツール</span>
<span class="t" style="left:3.6px;top:37.2px;font-size:18.95px;color:#f4f4f4;font-weight:500;transform:scaleX(0.782);">レイヤー</span>
<span class="t" style="left:3.2px;top:109.6px;font-size:18.12px;color:#f4f4f4;font-weight:500;transform:scaleX(0.802);">カメラ</span>
<span class="t" style="left:4.6px;top:159.7px;font-size:18.30px;color:#f4f4f4;font-weight:500;transform:scaleX(0.785);">ワークスペース</span>
<span class="t" style="left:1688.8px;top:8.3px;font-size:17.79px;color:#f4f4f4;font-weight:500;transform:scaleX(0.843);">レイヤー</span>
<span class="t" style="left:1576.7px;top:62.0px;font-size:16.91px;color:#eaeaea;font-weight:500;transform:scaleX(1.014);">名前...</span>
<span class="t" style="left:1613.6px;top:100.9px;font-size:16.38px;color:#f0f0f0;font-weight:500;transform:scaleX(1.055);">名前</span>
<span class="t" style="left:1668.7px;top:139.0px;font-size:18.17px;color:#ececec;font-weight:400;transform:scaleX(0.894);">PASS</span>
<span class="t" style="left:1668.4px;top:176.4px;font-size:18.17px;color:#000;font-weight:400;transform:scaleX(0.940);">G</span>
<span class="t" style="left:1669.0px;top:212.2px;font-size:19.11px;color:#ececec;font-weight:400;transform:scaleX(0.844);">Layer 1</span>
<span class="t" style="left:737.8px;top:623.4px;font-size:18.41px;color:#f4f4f4;font-weight:500;transform:scaleX(0.747);">フレーム</span>
<span class="t" style="left:795.2px;top:624.4px;font-size:17.89px;color:#0a0a0a;font-weight:400;transform:scaleX(1.010);">83</span>
<span class="t" style="left:904.4px;top:623.0px;font-size:21.49px;color:#f4f4f4;font-weight:500;transform:scaleX(1.064);">/</span>
<span class="t" style="left:920.2px;top:624.4px;font-size:17.89px;color:#0a0a0a;font-weight:400;transform:scaleX(0.993);">120</span>
<span class="t" style="left:1386.9px;top:623.6px;font-size:17.23px;color:#f0f0f0;font-weight:500;transform:scaleX(1.042);">表示画質</span>
<span class="t" style="left:65.2px;top:668.2px;font-size:16.92px;color:#f4f4f4;font-weight:500;transform:scaleX(0.903);">チャンネル</span>
<span class="t" style="left:147.7px;top:668.2px;font-size:17.70px;color:#f4f4f4;font-weight:500;transform:scaleX(0.814);">シーケンサ</span>
<span class="t" style="left:230.2px;top:667.1px;font-size:16.38px;color:#f4f4f4;font-weight:500;transform:scaleX(0.862);">モーショングラフ</span>
<span class="t" style="left:380.2px;top:665.1px;font-size:19.15px;color:#f4f4f4;font-weight:500;transform:scaleX(0.809);">リニア</span>
<span class="t" style="left:556.1px;top:666.9px;font-size:16.99px;color:#8c8c8c;font-weight:400;transform:scaleX(0.883);">オニオンスキン</span>
<span class="t" style="left:735.3px;top:666.3px;font-size:17.66px;color:#f4f4f4;font-weight:500;transform:scaleX(0.849);">相対キーフレーム</span>
<span class="t" style="left:913.6px;top:666.0px;font-size:17.47px;color:#f4f4f4;font-weight:500;transform:scaleX(0.868);">キーを自動フリーズ</span>
<span class="t" style="left:1210.7px;top:678.0px;font-size:17.41px;color:#e2e2e2;font-weight:500;transform:scaleX(0.820);">キーフレーム:</span>
<span class="t" style="left:1302.8px;top:677.7px;font-size:17.75px;color:#e2e2e2;font-weight:500;transform:scaleX(1.039);">60</span>
<span class="t" style="left:1210.9px;top:721.2px;font-size:16.49px;color:#e2e2e2;font-weight:500;transform:scaleX(1.081);">補間:</span>
<span class="t" style="left:1273.2px;top:721.4px;font-size:18.41px;color:#f4f4f4;font-weight:500;transform:scaleX(0.818);">リニア</span>
<span class="t" style="left:18.0px;top:693.9px;width:60px;text-align:center;font-size:18.73px;color:#2ad4f4;font-weight:400;transform-origin:50% 0;transform:scaleX(0.968);">0</span>
<span class="t" style="left:66.0px;top:693.9px;width:60px;text-align:center;font-size:18.73px;color:#f4f4f4;font-weight:400;transform-origin:50% 0;transform:scaleX(0.968);">6</span>
<span class="t" style="left:114.0px;top:693.9px;width:60px;text-align:center;font-size:18.73px;color:#f4f4f4;font-weight:400;transform-origin:50% 0;transform:scaleX(0.968);">12</span>
<span class="t" style="left:162.0px;top:693.9px;width:60px;text-align:center;font-size:18.73px;color:#f4f4f4;font-weight:400;transform-origin:50% 0;transform:scaleX(0.968);">18</span>
<span class="t" style="left:210.0px;top:693.9px;width:60px;text-align:center;font-size:18.73px;color:#f4f4f4;font-weight:400;transform-origin:50% 0;transform:scaleX(0.968);">24</span>
<span class="t" style="left:258.0px;top:693.9px;width:60px;text-align:center;font-size:18.73px;color:#f4f4f4;font-weight:400;transform-origin:50% 0;transform:scaleX(0.968);">30</span>
<span class="t" style="left:306.0px;top:693.9px;width:60px;text-align:center;font-size:18.73px;color:#f4f4f4;font-weight:400;transform-origin:50% 0;transform:scaleX(0.968);">36</span>
<span class="t" style="left:354.0px;top:693.9px;width:60px;text-align:center;font-size:18.73px;color:#f4f4f4;font-weight:400;transform-origin:50% 0;transform:scaleX(0.968);">42</span>
<span class="t" style="left:402.0px;top:693.9px;width:60px;text-align:center;font-size:18.73px;color:#f4f4f4;font-weight:400;transform-origin:50% 0;transform:scaleX(0.968);">48</span>
<span class="t" style="left:450.0px;top:693.9px;width:60px;text-align:center;font-size:18.73px;color:#f4f4f4;font-weight:400;transform-origin:50% 0;transform:scaleX(0.968);">54</span>
<span class="t" style="left:498.0px;top:693.9px;width:60px;text-align:center;font-size:18.73px;color:#f4f4f4;font-weight:400;transform-origin:50% 0;transform:scaleX(0.968);">60</span>
<span class="t" style="left:546.0px;top:693.9px;width:60px;text-align:center;font-size:18.73px;color:#f4f4f4;font-weight:400;transform-origin:50% 0;transform:scaleX(0.968);">66</span>
<span class="t" style="left:594.0px;top:693.9px;width:60px;text-align:center;font-size:18.73px;color:#f4f4f4;font-weight:400;transform-origin:50% 0;transform:scaleX(0.968);">72</span>
<span class="t" style="left:642.0px;top:693.9px;width:60px;text-align:center;font-size:18.73px;color:#f4f4f4;font-weight:400;transform-origin:50% 0;transform:scaleX(0.968);">78</span>
<span class="t" style="left:690.0px;top:693.9px;width:60px;text-align:center;font-size:18.73px;color:#f4f4f4;font-weight:400;transform-origin:50% 0;transform:scaleX(0.968);">84</span>
<span class="t" style="left:738.0px;top:693.9px;width:60px;text-align:center;font-size:18.73px;color:#f4f4f4;font-weight:400;transform-origin:50% 0;transform:scaleX(0.968);">90</span>
<span class="t" style="left:786.0px;top:693.9px;width:60px;text-align:center;font-size:18.73px;color:#f4f4f4;font-weight:400;transform-origin:50% 0;transform:scaleX(0.968);">96</span>
<span class="t" style="left:834.0px;top:693.9px;width:60px;text-align:center;font-size:18.73px;color:#f4f4f4;font-weight:400;transform-origin:50% 0;transform:scaleX(0.968);">102</span>
<span class="t" style="left:882.0px;top:693.9px;width:60px;text-align:center;font-size:18.73px;color:#f4f4f4;font-weight:400;transform-origin:50% 0;transform:scaleX(0.968);">108</span>
<span class="t" style="left:930.0px;top:693.9px;width:60px;text-align:center;font-size:18.73px;color:#f4f4f4;font-weight:400;transform-origin:50% 0;transform:scaleX(0.968);">114</span>
<span class="t" style="left:978.0px;top:693.9px;width:60px;text-align:center;font-size:18.73px;color:#f4f4f4;font-weight:400;transform-origin:50% 0;transform:scaleX(0.968);">120</span>
<span class="t" style="left:1026.0px;top:693.9px;width:60px;text-align:center;font-size:18.73px;color:#f4f4f4;font-weight:400;transform-origin:50% 0;transform:scaleX(0.968);">126</span>
<span class="t" style="left:1074.0px;top:693.9px;width:60px;text-align:center;font-size:18.73px;color:#f4f4f4;font-weight:400;transform-origin:50% 0;transform:scaleX(0.968);">132</span>
<span class="t" style="left:1122.0px;top:693.9px;width:60px;text-align:center;font-size:18.73px;color:#f4f4f4;font-weight:400;transform-origin:50% 0;transform:scaleX(0.968);">138</span>
<span class="t" style="left:18.0px;top:740.6px;width:60px;text-align:center;font-size:18.57px;color:#a99c9c;font-weight:400;transform-origin:50% 0;transform:scaleX(0.983);">0</span>
<span class="t" style="left:257.8px;top:740.6px;width:60px;text-align:center;font-size:18.57px;color:#a99c9c;font-weight:400;transform-origin:50% 0;transform:scaleX(0.983);">1</span>
<span class="t" style="left:498.0px;top:740.6px;width:60px;text-align:center;font-size:18.57px;color:#a99c9c;font-weight:400;transform-origin:50% 0;transform:scaleX(0.983);">2</span>
<span class="t" style="left:738.0px;top:740.6px;width:60px;text-align:center;font-size:18.57px;color:#a99c9c;font-weight:400;transform-origin:50% 0;transform:scaleX(0.983);">3</span>
<span class="t" style="left:978.0px;top:740.6px;width:60px;text-align:center;font-size:18.57px;color:#a99c9c;font-weight:400;transform-origin:50% 0;transform:scaleX(0.983);">4</span>
</div>
<!-- TEXT END -->
</body>
</html>
